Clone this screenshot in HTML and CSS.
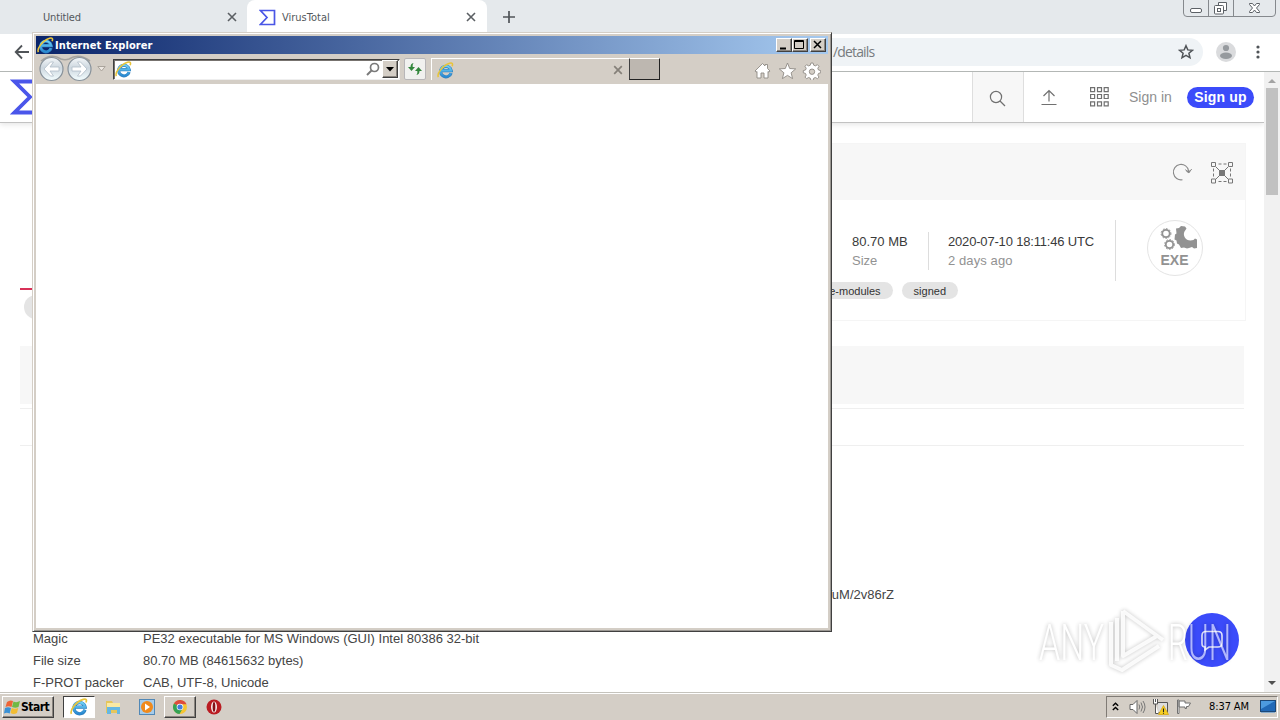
FILE: index.html
```html
<!DOCTYPE html>
<html lang="en">
<head>
<meta charset="utf-8">
<title>VirusTotal</title>
<link rel="stylesheet" href="styles.css">
</head>
<body>
<svg class="defs" width="0" height="0">
  <defs>
    <linearGradient id="orb" x1="0" y1="0" x2="0" y2="1"><stop offset="0" stop-color="#f4f7f9"/><stop offset=".45" stop-color="#cdd7df"/><stop offset="1" stop-color="#f4feff"/></linearGradient>
    <linearGradient id="blue" x1="0" y1="0" x2="0" y2="1"><stop offset="0" stop-color="#6fd0f6"/><stop offset="1" stop-color="#2a8ad2"/></linearGradient>
    <symbol id="ie" viewBox="0 0 16 16">
      <path d="M13.300 10.400A5 5 0 1 1 13.400 8.100H4.500" fill="none" stroke="#2f7fbd" stroke-width="2.900"/>
      <path d="M13.100 10.400A5 5 0 1 1 13.300 8.100H4.500" fill="none" stroke="url(#blue)" stroke-width="2"/>
      <path d="M1.300 14.200C-.4 11 5.400 3 11.800 1.200c3-.8 3.200.8 2.400 2.800" fill="none" stroke="#e8c43a" stroke-width="1.500"/>
    </symbol>
  </defs>
</svg>
<div class="desktop">
  <div class="tabstrip">
    <div class="tab tab-idle"><span class="tab-name">Untitled</span>
      <svg class="tab-x" width="10" height="10" viewBox="0 0 10 10"><path d="M1 1l8 8M9 1L1 9" stroke="#5b5f63" stroke-width="1.600"/></svg></div>
    <div class="tab tab-active">
      <svg width="17" height="17" viewBox="0 0 17 17"><path d="M1.500 1.500H15.500V15.500H1.500L8 8.500z" fill="none" stroke="#4a56e6" stroke-width="1.700"/></svg>
      <span class="tab-name">VirusTotal</span>
      <svg class="tab-x" width="10" height="10" viewBox="0 0 10 10"><path d="M1 1l8 8M9 1L1 9" stroke="#5b5f63" stroke-width="1.600"/></svg></div>
    <svg class="new-tab" width="12" height="12" viewBox="0 0 12 12"><path d="M6 0v12M0 6h12" stroke="#505458" stroke-width="1.700"/></svg>
    <svg class="caption" width="95" height="18" viewBox="0 0 95 18">
      <path d="M.5 0V13q0 3.500 3.500 3.500H89q3.500 0 3.500-3.500V0M25.500 0V16M50.500 0V16" fill="none" stroke="#85898d"/>
      <rect x="7.500" y="8.500" width="11" height="4" rx="1.500" fill="#fff" stroke="#5c6166"/>
      <path d="M35.500 5V2.500h8v8H41" fill="#fff" stroke="#5c6166"/><rect x="31.500" y="5.500" width="9" height="8.500" rx="1" fill="#fff" stroke="#5c6166"/><rect x="34.500" y="8.500" width="3" height="3" fill="none" stroke="#5c6166"/>
      <path d="M66.500 3.500h3l2 2.500 2-2.500h3v1l-3 3.500 3 3.500v1h-3l-2-2.500-2 2.500h-3v-1l3-3.500-3-3.500z" fill="#fff" stroke="#5c6166"/>
    </svg>
  </div>
  <div class="toolbar">
    <svg class="back" width="16" height="16" viewBox="0 0 16 16"><path d="M15 8H2M8 1.500L1.700 8 8 14.500" fill="none" stroke="#505458" stroke-width="1.800"/></svg>
    <div class="omnibox"><span class="url">/details</span>
      <svg width="16" height="16" viewBox="0 0 16 16"><path d="M8 1.700l1.800 4.200 4.600.4-3.500 3 1.100 4.500L8 11.400l-4 2.400 1.100-4.500-3.500-3 4.600-.4z" fill="none" stroke="#505458" stroke-width="1.500"/></svg></div>
    <svg class="avatar" width="20" height="20" viewBox="0 0 20 20"><circle cx="10" cy="10" r="10" fill="#dadbdd"/><circle cx="10" cy="6" r="3.100" fill="#969a9e"/><ellipse cx="10" cy="13.800" rx="6" ry="3.200" fill="#969a9e"/></svg>
    <svg class="dots" width="4" height="14" viewBox="0 0 4 14"><g fill="#505458"><circle cx="2" cy="2" r="1.600"/><circle cx="2" cy="7" r="1.600"/><circle cx="2" cy="12" r="1.600"/></g></svg>
  </div>
  <div class="viewport">
    <div class="page">
      <div class="vt-head">
        <svg class="vt-logo" width="40" height="36" viewBox="0 0 40 36"><path d="M4.500 2.500H38V33.500H4.500L20 18z" fill="none" stroke="#4a56ea" stroke-width="3.800"/></svg>
        <div class="vt-search"><svg width="17" height="17" viewBox="0 0 17 17"><circle cx="7" cy="7" r="5.600" fill="none" stroke="#707070" stroke-width="1.200"/><path d="M11 11l5 5" stroke="#707070" stroke-width="1.300"/></svg></div>
        <svg class="vt-up" width="16" height="17" viewBox="0 0 16 17"><path d="M8 12.500V2M2.500 7L8 1.500 13.500 7M.5 15.500h15" fill="none" stroke="#707070" stroke-width="1.200"/></svg>
        <svg class="vt-grid" width="19" height="20" viewBox="0 0 19 20"><g fill="none" stroke="#707070" stroke-width="1.200"><path d="M.6.6h4v4h-4zM7.500.6h4v4h-4zM14.200.6h4v4h-4zM.6 7.500h4v4h-4zM7.500 7.500h4v4h-4zM14.200 7.500h4v4h-4zM.6 14.800h4v4h-4zM7.500 14.800h4v4h-4zM14.200 14.800h4v4h-4z"/></g></svg>
        <span class="sign-in">Sign in</span><span class="sign-up">Sign up</span>
      </div>
      <div class="summary">
        <div class="score"><div class="score-line"></div><div class="score-pill"></div></div>
        <div class="card">
          <div class="card-head">
            <svg width="21" height="20" viewBox="0 0 21 20"><path d="M10.500 17.700A7.700 7.700 0 1 1 16.700 9" fill="none" stroke="#8a8a8a" stroke-width="1.100"/><path d="M13.300 8.500h5.400L16.800 11.300z" fill="#8a8a8a"/><path d="M13.500 7.500l3.200 3.500 3-4" fill="none" stroke="#8a8a8a"/></svg>
            <svg width="23" height="23" viewBox="0 0 23 23"><g fill="none" stroke="#777"><path d="M.5 1.500h4v4h-4zM17.500 1.500h4v4h-4zM.5 18h4v4h-4zM17.500 18h4v4h-4z"/><path d="M7.500 3h8M7.500 20.500h8M2.500 7.500v9M19.500 7.500v9" stroke-dasharray="3 2"/><path d="M5 6l12 12M17 6L5 18"/></g><rect x="8" y="9" width="6" height="6" fill="#777"/></svg>
          </div>
          <div class="facts">
            <div class="fact size"><span class="val v1">80.70 MB</span><span class="key k1">Size</span></div>
            <div class="fact date"><span class="val v2">2020-07-10 18:11:46 UTC</span><span class="key k2">2 days ago</span></div>
            <div class="filetype">
              <svg width="38" height="26" viewBox="0 0 38 26"><g fill="none" stroke="#929292" stroke-width="1.800"><circle cx="6" cy="8.500" r="3.700"/><circle cx="9.500" cy="19.500" r="3.700"/></g><g fill="none" stroke="#929292" stroke-width="1" stroke-dasharray="1.700 1.500"><circle cx="6" cy="8.500" r="4.900"/><circle cx="9.500" cy="19.500" r="4.900"/></g><path d="M16 3.500l3-.5 2-2 4 .5 1.500 2-2 3c-2 4 1 9 6 9l3-.5 1.500-1.500 2 1v8.500l-3 .5-2-1.500-3 1-2 .5-3-1-3 .5-2-3.500-2-1-.5-3-2-1 .5-5 1.500-1z" fill="#929292"/></svg>
              <b class="exe">EXE</b>
            </div>
          </div>
          <div class="tags"><span class="tag t1">e-modules</span><span class="tag t2">signed</span></div>
        </div>
      </div>
      <div class="band"></div>
      <div class="strip"></div>
      <div class="details">
        <div class="row hash"><span>YuM/2v86rZ</span></div>
        <div class="row"></div>
        <div class="row"><span class="l1">Magic</span><span class="d1">PE32 executable for MS Windows (GUI) Intel 80386 32-bit</span></div>
        <div class="row"><span class="l2">File size</span><span class="d2">80.70 MB (84615632 bytes)</span></div>
        <div class="row"><span class="l3">F-PROT packer</span><span class="d3">CAB, UTF-8, Unicode</span></div>
      </div>
    </div>
    <div class="scroll"><i class="arrow up"></i><i class="thumb"></i><i class="arrow down"></i></div>
    <div class="chat"><svg width="24" height="24" viewBox="0 0 24 24"><path d="M6 3.500h12q4 0 4 4v8q0 3.500-4 3.500h-9l-4 3v-3q-3 0-3-3.500v-8q0-4 4-4z" fill="none" stroke="#e4e7ff" stroke-width="1.600"/></svg></div>
  </div>
  <div class="taskbar">
    <div class="start"><svg width="17" height="16" viewBox="0 0 17 16"><path d="M3 3q3-2.500 6-1L7.500 8Q4.500 6.500 1.500 8z" fill="#ee6436"/><path d="M9.500 2.500q3 1.500 6.500-.5L14.500 8q-3 1.500-6.500 0z" fill="#71b944"/><path d="M1 9q3-1.500 6 0l-1.300 5.500q-3-1.500-5.700 0z" fill="#3b91d5"/><path d="M7.700 9q3.300 1.500 6.500 0L13 14q-3.500 2-6.500 0z" fill="#f2bd34"/></svg><b>Start</b></div>
    <div class="task task-ie"><svg width="18" height="18"><use href="#ie"/></svg></div>
    <svg class="folder" width="17" height="16" viewBox="0 0 17 16"><path d="M1 2h6l1 2h6v10H1z" fill="#e5c65c"/><path d="M2 4h13v6H2z" fill="#f9e9a3"/><path d="M2 8h13v7h-3v-4H6v4H2z" fill="#65b7e3"/></svg>
    <svg class="media" width="16" height="16" viewBox="0 0 16 16"><rect x=".5" y=".5" width="15" height="15" fill="#a6ccea" stroke="#5188b6"/><circle cx="8" cy="8" r="6" fill="#f08a1c"/><path d="M6 4.500l5 3.500-5 3.500z" fill="#fff"/></svg>
    <div class="task task-chrome"><svg width="16" height="16" viewBox="0 0 16 16"><circle cx="8" cy="8" r="7" fill="#f6c531"/><path d="M8 8L1.900 4.500A7 7 0 0 1 14.500 5.300H8z" fill="#dd4b3e"/><path d="M8 8L1.900 4.500A7 7 0 0 0 7.500 15l3.200-5.500z" fill="#35a255"/><circle cx="8" cy="8" r="3.300" fill="#fff"/><circle cx="8" cy="8" r="2.600" fill="#427ddb"/></svg></div>
    <svg class="opera" width="16" height="16" viewBox="0 0 16 16"><circle cx="8" cy="8" r="7.500" fill="#ba1c22"/><ellipse cx="8" cy="8" rx="2.900" ry="5.500" fill="#fff"/><ellipse cx="8" cy="8" rx="1.400" ry="4.900" fill="#841016"/></svg>
    <div class="tray">
      <svg class="chev" width="7" height="9" viewBox="0 0 7 9"><path d="M.8 3.800l2.700-2.600 2.700 2.600M.8 8l2.700-2.600L6.200 8" fill="none" stroke="#000" stroke-width="1.400"/></svg>
      <svg class="vol" width="17" height="16" viewBox="0 0 17 16"><path d="M1 5.500h3l4-4v13l-4-4H1z" fill="#fff" stroke="#666"/><path d="M10 5.500q1.500 2.500 0 5M12 3.500q3 4.500 0 9M14 2q4 6 0 12" fill="none" stroke="#777"/></svg>
      <svg class="net" width="17" height="16" viewBox="0 0 17 16"><path d="M5.500 3.500h10v10h-9" fill="#ddd" stroke="#555"/><path d="M1.500 0v5h4V0M3.500 5v9.500h3M3.500 0v3" fill="#fff" stroke="#555"/><path d="M11.500 6.500l5 9h-10z" fill="#f6cf22" stroke="#d8a400" stroke-width=".7"/><path d="M11.500 9.500v3.500M11.500 13.800v1" stroke="#222" stroke-width="1.100"/></svg>
      <svg class="flag" width="16" height="16" viewBox="0 0 16 16"><path d="M1.500 1v13.500h1.500V1zM3 2h6v2h5.500l-2 3.500h-2v2H9V8H3z" fill="#fff" stroke="#707070"/></svg>
      <span class="clock">8:37 AM</span>
      <svg class="show" width="16" height="14" viewBox="0 0 16 14"><rect x=".5" y=".5" width="15" height="11" fill="#2169b7" stroke="#1c4878"/><path d="M1 1h14L1 9z" fill="#4d9be0"/><path d="M1 12.500h14" stroke="#86aacb"/></svg>
    </div>
  </div>

  <div class="ie-window">
    <div class="ie-title"><svg width="17" height="17"><use href="#ie"/></svg><b>Internet Explorer</b>
      <span class="cap"><svg width="13" height="12"><path d="M3 9.500h6" stroke="#000" stroke-width="2"/></svg></span>
      <span class="cap"><svg width="13" height="12"><path d="M1.500 1.500h9v8h-9zM1 2.500h10" fill="none" stroke="#000"/></svg></span>
      <span class="cap cap-close"><svg width="13" height="12"><path d="M3 2l7 7M10 2l-7 7" stroke="#000" stroke-width="1.500"/></svg></span>
    </div>
    <div class="ie-bar">
      <svg class="nav" width="55" height="28" viewBox="0 0 55 28"><path d="M3 6Q13-2 23 4q4 1.500 8 0Q41-2 52 6" fill="none" stroke="#a5a3a0" stroke-width="1.600"/><g fill="url(#orb)" stroke="#87919a" stroke-width="1.200"><circle cx="13.500" cy="14" r="11.500"/><circle cx="41.500" cy="14" r="11.500"/></g><g fill="#fff" stroke="#b0bdc8" stroke-width=".8"><path d="M6 14l6.500-7h3l-3.500 5h9v4h-9l3.500 5h-3z"/><path d="M49 14l-6.500-7h-3l3.500 5h-9v4h9l-3.500 5h3z"/></g></svg>
      <svg class="nav-menu" width="9" height="6" viewBox="0 0 9 6"><path d="M.8.5h7.400L4.500 5z" fill="#eee9e3" stroke="#aaa49c"/></svg>
      <div class="address"><svg width="17" height="17"><use href="#ie"/></svg>
        <svg class="lens" width="14" height="14" viewBox="0 0 14 14"><circle cx="8.500" cy="5.500" r="4" fill="none" stroke="#7a7a7a" stroke-width="1.700"/><path d="M5.500 8.500L1 13" stroke="#7a7a7a" stroke-width="2"/></svg>
        <span class="drop"><svg width="8" height="5"><path d="M0 0h8L4 4.500z"/></svg></span></div>
      <div class="refresh"><svg width="16" height="14" viewBox="0 0 16 14"><path d="M6.500 1Q3.500 1.500 3.500 5H1l3.500 4L8 5H5.700Q5.200 3 6.500 1zM9.500 13q3-.5 3-4H15l-3.500-4L8 9h2.300q.5 2-.8 4z" fill="#32863b"/></svg></div>
      <div class="ie-tab"><svg width="17" height="17"><use href="#ie"/></svg><svg class="ie-x" width="10" height="10" viewBox="0 0 10 10"><path d="M1.200 1.200l7.600 7.600M8.800 1.200L1.200 8.800" stroke="#858079" stroke-width="1.700"/></svg></div>
      <div class="ie-new"></div>
      <svg class="tools" width="67" height="18" viewBox="0 0 67 18"><g fill="#fff" stroke="#8f8a85" stroke-width=".9" stroke-linejoin="round"><path d="M1 9L8.500 1.500 11 4V2.500h2.500v4L16 9l-1 1.200-1-.7v6.500H10v-5H7v5H3V9.500l-1 .7z"/><path d="M33.500 1l2.200 5.500 6 .4-4.600 3.900 1.500 5.800-5.100-3.200-5.100 3.200 1.500-5.800-4.600-3.900 6-.4z"/><path d="M56.900 1h2.200l.6 2.200 1.700.7 2-1.200 1.600 1.600-1.200 2 .7 1.700 2.200.6v2.200l-2.200.6-.7 1.700 1.200 2-1.600 1.600-2-1.200-1.700.7-.6 2.200h-2.200l-.6-2.200-1.700-.7-2 1.200-1.600-1.600 1.200-2-.7-1.700-2.200-.6V8.600l2.200-.6.700-1.700-1.200-2 1.600-1.600 2 1.200 1.700-.7z"/><circle cx="58" cy="9.700" r="2.700" fill="#d4cec6"/></g></svg>
    </div>
    <div class="ie-body"></div>
  </div>

  <svg class="watermark" width="215" height="80" viewBox="0 0 215 80">
    <g class="wm-text"><text x="4" y="52" textLength="65" lengthAdjust="spacingAndGlyphs">ANY</text><text x="133" y="52" textLength="63" lengthAdjust="spacingAndGlyphs">RUN</text></g>
    <g fill="none" stroke="#fff" stroke-opacity=".85" stroke-width="4" stroke-linejoin="round"><path d="M88 3L128 32M88 3V48L122 28M76 14V57L87 62 124 38M82 10V53"/></g>
  </svg>
</div>
</body>
</html>
```

FILE: styles.css
```css
* { box-sizing: border-box; }
body { margin: 0; background: #fff; font-family: "Liberation Sans", Arial, sans-serif; }
svg { display: block; flex: none; }
.defs { position: absolute; }
.desktop { position: relative; width: 1280px; height: 720px; overflow: hidden; display: flex; flex-direction: column; }
span, b { white-space: nowrap; }

.tabstrip { height: 34px; flex: none; display: flex; align-items: flex-start; background: #e5e9ec; }
.tab { height: 34px; display: flex; align-items: center; font: 11px/14px "DejaVu Sans Condensed", "DejaVu Sans", sans-serif; color: #54585c; }
.tab-name { padding-top: 1px; letter-spacing: -.15px; }
.tab-idle { width: 247px; padding: 0 10px 0 43px; }
.tab-active { width: 240px; padding: 0 11px 0 12px; background: #fff; border-radius: 8px 8px 0 0; }
.tab-active .tab-name { margin-left: 6px; letter-spacing: 0; }
.tab-x { margin-left: auto; }
.new-tab { margin: 11px 0 0 16px; }
.caption { margin-left: auto; margin-right: 2px; }

.toolbar { height: 38px; flex: none; display: flex; align-items: center; padding: 0 20px 2px 14px; background: #fff; border-bottom: 1px solid #b3b7b5; }
.omnibox { width: 1130px; height: 28px; margin-left: 43px; padding: 0 9px 0 760px; display: flex; align-items: center; justify-content: space-between; background: #eff3f6; border-radius: 14px; color: #777b7f; }
.url { font: 14px/18px "Open Sans", sans-serif; letter-spacing: -.85px; }
.avatar { margin-left: 13px; }
.dots { margin-left: auto; }

.viewport { position: relative; height: 620px; flex: none; display: flex; }
.page { width: 1264px; height: 620px; overflow: hidden; display: flex; flex-direction: column; }
.vt-head { height: 51px; flex: none; display: flex; align-items: center; padding: 0 10px; border-bottom: 1px solid #c2c2c2; box-shadow: 0 2px 5px #e8e8e8; }
.vt-search { width: 52px; height: 50px; margin-left: 922px; display: flex; align-items: center; justify-content: center; padding: 3px 1px 0 0; border: solid #dedede; border-width: 0 1px; background: #f7f7f7; }
.vt-up { margin-left: 17px; }
.vt-grid { margin-left: 33px; }
.sign-in { margin-left: 20px; width: 44px; font-size: 14px; line-height: 18px; color: #8f8f8f; letter-spacing: 0; }
.sign-up { width: 67px; height: 21px; margin-left: 14px; border-radius: 11px; background: #3b4bfa; color: #fff; text-align: center; font: bold 14px/21px "Liberation Sans", sans-serif; letter-spacing: .2px; }

.summary { height: 178px; flex: none; margin: 20px 18px 0 20px; display: flex; }
.score { width: 230px; padding-top: 145px; }
.score-line { height: 2px; background: #d83158; }
.score-pill { margin: 5px 4px; height: 24px; border-radius: 12px; background: #e4e4e4; }
.card { width: 996px; border: 1px solid #f5f5f5; }
.card-head { height: 56px; padding: 0 11px 0 0; display: flex; justify-content: flex-end; align-items: center; gap: 18px; background: #f7f7f7; }
.facts { height: 82px; padding: 20px 42px 0 0; display: flex; justify-content: flex-end; }
.fact { display: flex; flex-direction: column; font-size: 13px; line-height: 19px; }
.val { color: #3a3a3a; }
.v2 { letter-spacing: -.18px; }
.key { color: #929292; }
.k2 { letter-spacing: .1px; }
.size { width: 77px; height: 38px; margin: 12px 0 0; border-right: 1px solid #ddd; }
.date { width: 187px; height: 61px; padding: 12px 0 0 19px; border-right: 1px solid #ddd; }
.filetype { width: 56px; height: 56px; margin-left: 31px; border: 1px solid #e4e4e4; border-radius: 50%; display: flex; flex-direction: column; align-items: center; padding-top: 4px; }
.filetype svg { margin-left: 8px; }
.exe { margin-right: 1px; font-size: 14px; line-height: 18px; color: #929292; }
.tags { display: flex; justify-content: flex-end; gap: 9px; padding-right: 287px; }
.tag { height: 17px; padding: 1px 12px 0; border-radius: 9px; background: #e4e4e4; color: #333; font-size: 11px; line-height: 16px; }
.band { height: 58px; flex: none; margin: 25px 20px 0; background: #f7f7f7; }
.strip { height: 38px; flex: none; margin: 4px 20px 0; border: solid #efefef; border-width: 1px 0; }
.details { margin: 138px 0 0 33px; display: flex; flex-direction: column; font-size: 13px; color: #444; }
.row { height: 22px; flex: none; display: grid; grid-template-columns: 110px 1fr; line-height: 22px; }
.hash { width: 861px; display: flex; justify-content: flex-end; }
.scroll { width: 16px; background: #f1f1f1; display: flex; flex-direction: column; align-items: center; }
.arrow { border: 4px solid transparent; }
.up { margin-top: 3px; border-bottom-color: #a3a3a3; }
.down { margin-top: auto; margin-bottom: 3px; border-top-color: #505050; }
.thumb { width: 12px; height: 107px; margin-top: 5px; background: #c1c1c1; }
.chat { position: absolute; left: 1185px; top: 541px; width: 54px; height: 54px; border-radius: 50%; background: #3b4bfa; display: flex; align-items: center; justify-content: center; }

.taskbar { height: 28px; flex: none; display: flex; align-items: center; background: #d4cec6; border-top: 1px solid #c5c3bc; box-shadow: inset 0 1px #fff; padding: 0 2px 0 2px; font-family: "DejaVu Sans Condensed", "DejaVu Sans", sans-serif; }
.start { width: 52px; height: 22px; display: flex; align-items: center; border: 1px solid; border-color: #fff #404040 #404040 #fff; box-shadow: inset -1px -1px #8a857f; font-size: 12px; letter-spacing: -.5px; padding-left: 1px; }
.task { width: 32px; height: 22px; display: flex; align-items: center; justify-content: center; border: 1px solid; }
.task-ie { margin-left: 9px; background: #fff; border-color: #404040 #fff #fff #404040; }
.task-chrome { margin-left: 9px; border-color: #fff #404040 #404040 #fff; box-shadow: inset -1px -1px #8a857f; }
.folder { margin-left: 10px; }
.media { margin-left: 17px; }
.opera { margin-left: 10px; }
.tray { width: 172px; height: 22px; margin-left: auto; display: flex; align-items: center; border: 1px solid; border-color: #807b75 #fff #fff #807b75; }
.chev { margin-left: 5px; }
.vol { margin-left: 10px; }
.net { margin-left: 6px; }
.flag { margin-left: 7px; }
.clock { margin-left: 17px; width: 42px; font-size: 11px; letter-spacing: -.1px; }
.show { margin-left: auto; margin-right: 1px; }

.ie-window { position: absolute; left: 32px; top: 32px; width: 800px; height: 600px; display: flex; flex-direction: column; background: #d4cec6; border: 1px solid; border-color: #d4cec6 #404040 #404040 #d4cec6; box-shadow: inset 1px 1px #fff, inset -1px -1px #9a9792; padding: 3px; }
.ie-title { height: 18px; flex: none; display: flex; align-items: center; padding: 0 2px 0 1px; background: linear-gradient(90deg, #0a246a, #a6caf0); color: #fff; }
.ie-title b { margin: 0 auto 0 1px; padding-top: 2px; font: bold 11px/16px "DejaVu Sans Condensed", sans-serif; letter-spacing: .1px; }
.cap { width: 16px; height: 14px; background: #d4cec6; border: 1px solid; border-color: #fff #404040 #404040 #fff; box-shadow: inset -1px -1px #8a857f; }
.cap-close { margin-left: 2px; }
.ie-bar { height: 30px; flex: none; display: flex; align-items: center; padding-left: 2px; }
.nav-menu { margin-left: 4px; }
.address { width: 287px; height: 21px; margin-left: 7px; background: #fff; border: 1px solid; border-color: #404040 #eee #eee #404040; box-shadow: inset 1px 1px #77736f; display: flex; align-items: center; padding: 0 1px 0 1px; }
.lens { margin-left: auto; margin-right: 2px; }
.drop { width: 16px; height: 18px; background: #d4cec6; border: 1px solid; border-color: #fff #404040 #404040 #fff; box-shadow: inset -1px -1px #8a857f; display: flex; align-items: center; justify-content: center; }
.refresh { width: 22px; height: 22px; margin-left: 4px; border: 1px solid #b8b6b8; background: #f1f1ef; border-radius: 2px; display: flex; align-items: center; justify-content: center; }
.ie-tab { width: 198px; height: 22px; margin-left: 5px; border: solid #fff; border-width: 1px 0 0 1px; display: flex; align-items: center; padding: 1px 6px 0 5px; }
.ie-x { margin-left: auto; }
.ie-new { width: 31px; height: 22px; background: #bdb7b0; border: 1px solid; border-color: #fff #222 #222 #404040; }
.tools { margin: 4px 0 0 94px; }
.ie-body { flex: 1; background: #fff; }
.watermark { position: absolute; left: 1035px; top: 608px; filter: drop-shadow(0 0 2px rgba(0, 0, 0, .45)); opacity: .6; overflow: visible; }
.wm-text { font: 300 50px Roboto, sans-serif; fill: #fff; }
```
